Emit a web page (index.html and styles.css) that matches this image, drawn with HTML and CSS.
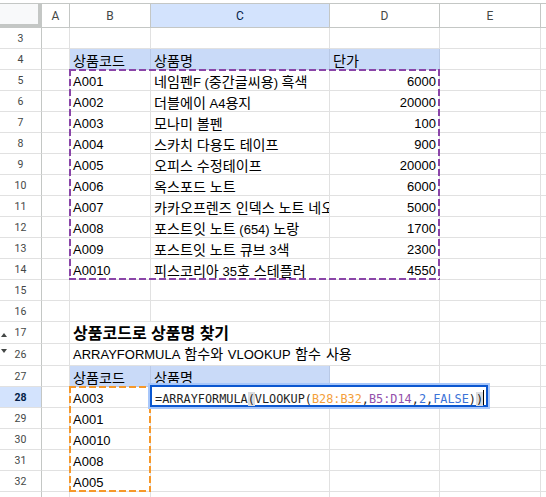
FILE: index.html
```html
<!DOCTYPE html>
<html lang="ko">
<head>
<meta charset="utf-8">
<title>Sheet</title>
<link rel="stylesheet" href="styles.css">
</head>
<body>
<div class="top"></div>
<div class="sheet">
  <div class="grid cells">
    <div class="corner"></div><div class="ch">A</div><div class="ch">B</div><div class="ch sel">C</div><div class="ch">D</div><div class="ch">E</div><div class="ch last"></div>

    <div class="rh">3</div><div class="c"></div><div class="c"></div><div class="c"></div><div class="c"></div><div class="c"></div><div class="c last"></div>
    <div class="rh">4</div><div class="c"></div><div class="c h"><span class="k">상품코드</span></div><div class="c h"><span class="k">상품명</span></div><div class="c h"><span class="k">단가</span></div><div class="c"></div><div class="c last"></div>
    <div class="rh">5</div><div class="c"></div><div class="c">A001</div><div class="c"><span class="k">네임펜</span>F (<span class="k">중간글씨용</span>) <span class="k">흑색</span></div><div class="c r">6000</div><div class="c"></div><div class="c last"></div>
    <div class="rh">6</div><div class="c"></div><div class="c">A002</div><div class="c"><span class="k">더블에이</span> A4<span class="k">용지</span></div><div class="c r">20000</div><div class="c"></div><div class="c last"></div>
    <div class="rh">7</div><div class="c"></div><div class="c">A003</div><div class="c"><span class="k">모나미 볼펜</span></div><div class="c r">100</div><div class="c"></div><div class="c last"></div>
    <div class="rh">8</div><div class="c"></div><div class="c">A004</div><div class="c"><span class="k">스카치 다용도 테이프</span></div><div class="c r">900</div><div class="c"></div><div class="c last"></div>
    <div class="rh">9</div><div class="c"></div><div class="c">A005</div><div class="c"><span class="k">오피스 수정테이프</span></div><div class="c r">20000</div><div class="c"></div><div class="c last"></div>
    <div class="rh">10</div><div class="c"></div><div class="c">A006</div><div class="c"><span class="k">옥스포드 노트</span></div><div class="c r">6000</div><div class="c"></div><div class="c last"></div>
    <div class="rh">11</div><div class="c"></div><div class="c">A007</div><div class="c"><span class="k">카카오프렌즈 인덱스 노트 네오</span></div><div class="c r">5000</div><div class="c"></div><div class="c last"></div>
    <div class="rh">12</div><div class="c"></div><div class="c">A008</div><div class="c"><span class="k">포스트잇 노트</span> (654) <span class="k">노랑</span></div><div class="c r">1700</div><div class="c"></div><div class="c last"></div>
    <div class="rh">13</div><div class="c"></div><div class="c">A009</div><div class="c"><span class="k">포스트잇 노트 큐브</span> 3<span class="k">색</span></div><div class="c r">2300</div><div class="c"></div><div class="c last"></div>
    <div class="rh">14</div><div class="c"></div><div class="c">A0010</div><div class="c"><span class="k">피스코리아</span> 35<span class="k">호 스테플러</span></div><div class="c r">4550</div><div class="c"></div><div class="c last"></div>
    <div class="rh">15</div><div class="c"></div><div class="c"></div><div class="c"></div><div class="c"></div><div class="c"></div><div class="c last"></div>
    <div class="rh">16</div><div class="c"></div><div class="c"></div><div class="c"></div><div class="c"></div><div class="c"></div><div class="c last"></div>
    <div class="rh"><span class="arrow up"></span>17</div><div class="c"></div><div class="c title">상품코드로 상품명 찾기</div><div class="c"></div><div class="c"></div><div class="c last"></div>
    <div class="rh"><span class="arrow down"></span>26</div><div class="c"></div><div class="c sub">ARRAYFORMULA <span class="k">함수와</span> VLOOKUP <span class="k">함수 사용</span></div><div class="c"></div><div class="c last"></div>
    <div class="rh">27</div><div class="c"></div><div class="c h"><span class="k">상품코드</span></div><div class="c h"><span class="k">상품명</span></div><div class="c"></div><div class="c"></div><div class="c last"></div>
    <div class="rh sel">28</div><div class="c"></div><div class="c">A003</div><div class="c"></div><div class="c"></div><div class="c"></div><div class="c last"></div>
    <div class="rh">29</div><div class="c"></div><div class="c">A001</div><div class="c"></div><div class="c"></div><div class="c"></div><div class="c last"></div>
    <div class="rh">30</div><div class="c"></div><div class="c">A0010</div><div class="c"></div><div class="c"></div><div class="c"></div><div class="c last"></div>
    <div class="rh">31</div><div class="c"></div><div class="c">A008</div><div class="c"></div><div class="c"></div><div class="c"></div><div class="c last"></div>
    <div class="rh">32</div><div class="c"></div><div class="c">A005</div><div class="c"></div><div class="c"></div><div class="c"></div><div class="c last"></div>
    <div class="rh"></div><div class="c"></div><div class="c"></div><div class="c"></div><div class="c"></div><div class="c"></div><div class="c last"></div>
  </div>
  <div class="grid overlay">
    <div class="range purple"></div>
    <div class="range orange"></div>
    <div class="editor"><span class="fx">=ARRAYFORMULA<span class="pm">(</span>VLOOKUP(<span class="or">B28:B32</span>,<span class="pu">B5:D14</span>,<span class="bl">2</span>,<span class="bl">FALSE</span>)<span class="pm">)</span></span><span class="caret"></span></div>
  </div>
</div>
</body>
</html>
```
FILE: styles.css
```css
* { box-sizing: border-box; }
html, body { margin: 0; padding: 0; }
body {
  width: 546px;
  height: 497px;
  overflow: hidden;
  background: #fff;
  color: #000;
  font-family: "Liberation Sans", "Noto Sans CJK KR", Arial, sans-serif;
}
.top { height: 3px; }
.sheet { display: grid; }
.grid {
  grid-area: 1 / 1;
  display: grid;
  grid-template-columns: 42px 28px 81px 179px 110px 101px 1fr;
  grid-template-rows: 25px repeat(14, 21px) 22px 22px repeat(7, 21px);
}
.overlay { pointer-events: none; }

.corner {
  background: #f8f9fa;
  border-top: 1px solid #c4c7c5;
  border-right: 4px solid #c4c7c5;
  border-bottom: 4px solid #c4c7c5;
}
.ch {
  display: flex;
  align-items: center;
  justify-content: center;
  background: #fff;
  border-top: 1px solid #c4c7c5;
  border-right: 1px solid #c4c7c5;
  border-bottom: 1px solid #c4c7c5;
  font: 12px Roboto, "Liberation Sans", sans-serif;
  color: #444746;
}
.ch.sel { background: #d3e3fd; color: #041e49; }
.ch.last { border-right: none; }

.rh {
  position: relative;
  display: flex;
  align-items: center;
  justify-content: center;
  border-right: 1px solid #c4c7c5;
  border-bottom: 1px solid #e1e1e1;
  font: 10.5px Roboto, "Liberation Sans", sans-serif;
  color: #444746;
}
.rh.sel { background: #d3e3fd; color: #041e49; font-weight: 700; }
.arrow {
  position: absolute;
  left: 1px;
  width: 0;
  height: 0;
  border-left: 3px solid transparent;
  border-right: 3px solid transparent;
}
.arrow.up { top: 11px; border-bottom: 4px solid #444746; }
.arrow.down { top: 5px; border-top: 4px solid #444746; }

.c {
  border-right: 1px solid #e1e1e1;
  border-bottom: 1px solid #e1e1e1;
  padding: 4px 3px 0;
  font-size: 13px;
  line-height: 16px;
  white-space: nowrap;
  overflow: hidden;
}
.c.last { border-right: none; }
.k { font-size: 14.1px; }
.r { text-align: right; }
.h {
  background: #c9daf8;
  border-right-color: #b9c9e6;
  border-bottom-color: #b9c9e6;
}
.title {
  grid-column: span 2;
  font-size: 16px;
  font-weight: 700;
  line-height: 18px;
  padding-top: 3px;
}
.sub {
  grid-column: span 3;
  padding-top: 2px;
  word-spacing: 1px;
}

.range {
  --c: #8a45a8;
  margin: -1px 0 0 -1px;
  background:
    repeating-linear-gradient(90deg, var(--c) 0 7px, transparent 7px 10px) left top / 100% 2px no-repeat,
    repeating-linear-gradient(90deg, var(--c) 0 7px, transparent 7px 10px) left bottom / 100% 2px no-repeat,
    repeating-linear-gradient(180deg, var(--c) 0 7px, transparent 7px 10px) left top / 2px 100% no-repeat,
    repeating-linear-gradient(180deg, var(--c) 0 7px, transparent 7px 10px) right top / 2px 100% no-repeat;
}
.purple { grid-row: 4 / 14; grid-column: 3 / 6; }
.orange { --c: #f6982a; grid-row: 19 / 24; grid-column: 3 / 4; }

.editor {
  grid-row: 19;
  grid-column: 4 / 7;
  align-self: start;
  justify-self: start;
  width: 338px;
  height: 22px;
  margin: -2px 0 0 -1px;
  padding: 3px 0 0 3px;
  background: #fff;
  border: 2px solid #0b57d0;
  box-shadow: 0 0 0 2px #a8c7fa;
  font-family: "DejaVu Sans Mono", "Liberation Mono", monospace;
  font-size: 11.85px;
  line-height: 16px;
  white-space: nowrap;
  color: #1f1f1f;
}
.pm { background: #dadce0; }
.or { color: #f4a03a; }
.pu { color: #9450ab; }
.bl { color: #3b73d8; }
.caret {
  display: inline-block;
  width: 1px;
  height: 15px;
  background: #000;
  vertical-align: -2px;
}
```
